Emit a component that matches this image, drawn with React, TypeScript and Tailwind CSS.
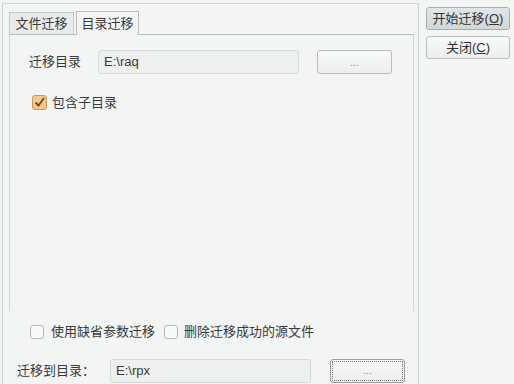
import React from "react";

const font = { fontFamily: '"Liberation Sans", "Noto Sans CJK SC", sans-serif' };

const Check = ({ checked }: { checked?: boolean }) =>
  checked ? (
    <span className="flex h-[15px] w-[15px] items-center justify-center rounded-[3px] border border-[#c99a5c] bg-[#f5c98d]">
      <svg width="11" height="11" viewBox="0 0 11 11">
        <path d="M1.5 5.5 L4.5 8.5 L10 1" fill="none" stroke="#6b4a1e" strokeWidth="1.8" />
      </svg>
    </span>
  ) : (
    <span className="block h-[14px] w-[14px] rounded-[3px] border border-[#b4b8b8] bg-[#f7f8f8]" />
  );

const DotsButton = ({ focus }: { focus?: boolean }) => (
  <button
    className={
      "flex h-[24px] w-[75px] items-center justify-center rounded-[3px] border bg-gradient-to-b from-[#f8f9f9] to-[#eceeee] text-[10px] text-[#888] " +
      (focus ? "border-[#9a9e9e] outline-1 outline-dotted outline-[#777] -outline-offset-[3px]" : "border-[#b8bcbc]")
    }
  >
    ...
  </button>
);

export default function App() {
  return (
    <div className="flex h-[384px] w-[514px] bg-[#f3f4f4] text-[13px] text-[#3a3a3a]" style={font}>
      {/* left part */}
      <div className="ml-[2px] mt-[3px] flex w-[417px] flex-col border-l border-r border-t border-[#cfd2d2] pl-[6px]">
        <div className="flex h-[30px] items-end pt-[7px]">
          <div className="flex h-[22px] w-[65px] items-center justify-center border border-b-0 border-[#c6caca] bg-[#e9ebeb]">
            文件迁移
          </div>
          <div className="relative top-[1px] ml-[2px] flex h-[24px] w-[63px] items-center justify-center border border-b-0 border-[#b9bdbd] bg-[#f3f4f4]">
            目录迁移
          </div>
        </div>
        <div className="mr-[4px] h-[277px] border-l border-r border-t border-[#b9bdbd] border-l-[#d4d7d7] border-r-[#d4d7d7] pl-[19px] pt-[15px]">
          <div className="flex items-center">
            <span className="w-[69px]">迁移目录</span>
            <div className="flex h-[24px] w-[201px] items-center rounded-[3px] border border-[#d6d9d9] bg-[#eef0f0] pl-[5px]">
              E:\raq
            </div>
            <div className="ml-[18px]">
              <DotsButton />
            </div>
          </div>
          <div className="ml-[3px] mt-[19px] flex items-center gap-[5px]">
            <Check checked />
            <span>包含子目录</span>
          </div>
        </div>
        <div className="mt-[11px] flex items-center pl-[21px]">
          <Check />
          <span className="ml-[7px]">使用缺省参数迁移</span>
          <span className="ml-[9px]">
            <Check />
          </span>
          <span className="ml-[6px]">删除迁移成功的源文件</span>
        </div>
        <div className="mt-[17px] flex items-center pl-[8px]">
          <span className="w-[93px]">迁移到目录：</span>
          <div className="flex h-[24px] w-[201px] items-center rounded-[3px] border border-[#d6d9d9] bg-[#eef0f0] pl-[5px]">
            E:\rpx
          </div>
          <div className="ml-[19px]">
            <DotsButton focus />
          </div>
        </div>
      </div>
      {/* right part */}
      <div className="flex flex-col gap-[6px] pl-[7px] pt-[7px]">
        <button className="h-[23px] w-[84px] rounded-[3px] border border-[#a9adad] bg-gradient-to-b from-[#e3e6e6] to-[#d3d7d7] text-[#333]">
          开始迁移(<span className="underline">O</span>)
        </button>
        <button className="h-[23px] w-[84px] rounded-[3px] border border-[#b8bcbc] bg-gradient-to-b from-[#f8f9f9] to-[#eceeee] text-[#333]">
          关闭(<span className="underline">C</span>)
        </button>
      </div>
    </div>
  );
}
